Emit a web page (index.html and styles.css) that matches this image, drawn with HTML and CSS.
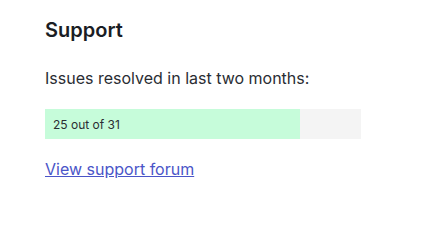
FILE: index.html
```html
<!DOCTYPE html>
<html>
<head>
<meta charset="utf-8">
<link rel="stylesheet" href="styles.css">
</head>
<body>
<section class="card">
  <h2 class="title">Support</h2>
  <p class="desc">Issues resolved in last two months:</p>
  <div class="bar">
    <div class="bar-fill" style="width: 80.6%">
      <span class="bar-label">25 out of 31</span>
    </div>
  </div>
  <a class="link" href="#">View support forum</a>
</section>
</body>
</html>
```
FILE: styles.css
```css
html, body {
  margin: 0;
  padding: 0;
  background: #ffffff;
}
body {
  font-family: Inter, "Noto Sans", sans-serif;
  color: #1f2328;
}
.card {
  padding: 16px 45px 0 45px;
  width: 316px;
}
.title {
  margin: 0;
  font-size: 20px;
  font-weight: 600;
  line-height: 28px;
  color: #1a1d24;
}
.desc {
  margin: 23px 0 0 0;
  font-size: 16px;
  line-height: 22px;
  color: #2a2d33;
}
.bar {
  margin-top: 20px;
  height: 30px;
  background: #f4f4f4;
  display: flex;
}
.bar-fill {
  background: #c6fcda;
  display: flex;
  align-items: center;
  padding-left: 8px;
  box-sizing: border-box;
}
.bar-label {
  font-size: 12px;
  color: #2a2d33;
}
.link {
  display: inline-block;
  margin-top: 19px;
  font-size: 16px;
  line-height: 22px;
  color: #4a55c8;
}
```
